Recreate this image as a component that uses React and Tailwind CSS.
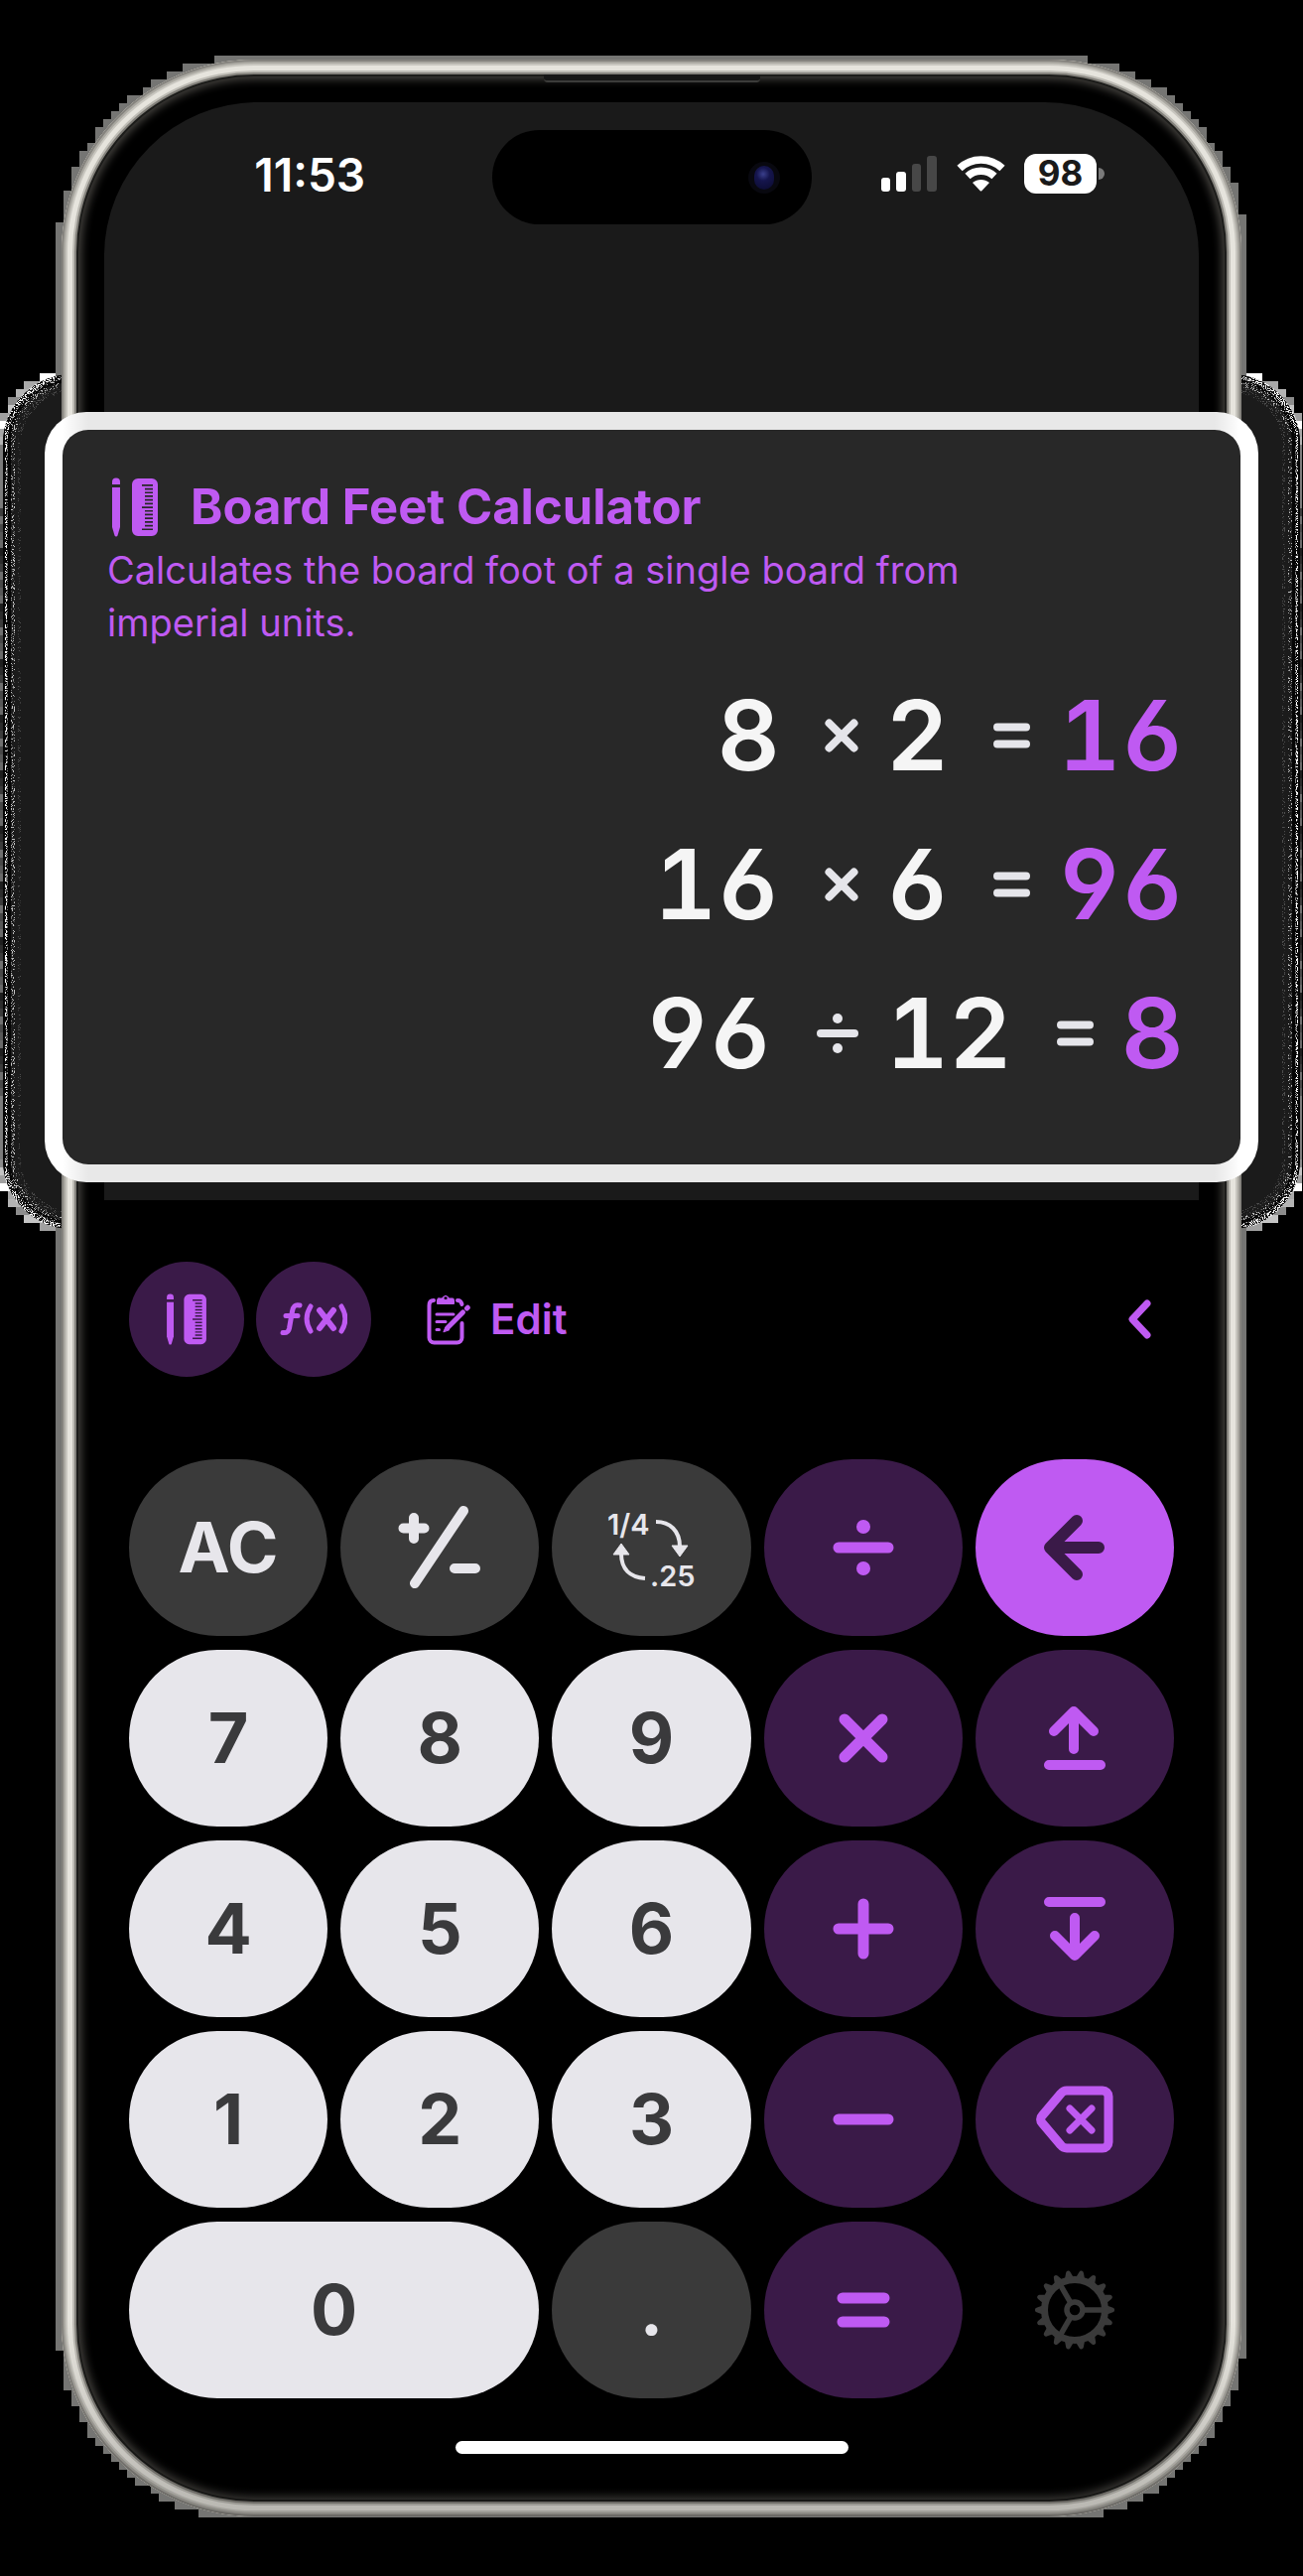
import React from "react";

const W = 1313;
const H = 2595;
const CELL = 8;

/* rows of 8px cells that cover a rounded rectangle, snapped outward */
function steppedRows({ x0, y0, x1, y1, r }) {
  const rows = [];
  for (let y = Math.floor(y0 / CELL) * CELL; y < y1; y += CELL) {
    const mid = y < (y0 + y1) / 2 ? y + CELL : y;
    let dy = 0;
    if (mid < y0 + r) dy = y0 + r - mid;
    if (mid > y1 - r) dy = mid - (y1 - r);
    const inset = dy > 0 ? r - Math.sqrt(Math.max(0, r * r - dy * dy)) : 0;
    const left = Math.floor((x0 + inset) / CELL) * CELL;
    const right = Math.ceil((x1 - inset) / CELL) * CELL;
    rows.push({ x: left, y, w: right - left });
  }
  return rows;
}

const phoneRows = steppedRows({ x0: 62, y0: 60, x1: 1251, y1: 2535, r: 196 });
const haloRows = steppedRows({ x0: 3, y0: 377, x1: 1310, y1: 1238, r: 70 });

const cornerGreys = ["#ffffff", "#a8a8a8", "#b4b4b4", "#8c8c8c", "#c4c4c4", "#a0a0a0"];
const edgeGreys = ["#6a6a6a", "#3c3c3c", "#585858", "#2c2c2c", "#484848", "#1e1e1e", "#707070"];

function haloFill(y, i) {
  const fromEnd = Math.min(y - 376, 1232 - y);
  if (fromEnd < 72) return cornerGreys[i % 6];
  if (fromEnd < 130) return "#7c7c7c";
  return edgeGreys[(i * 5) % 7];
}

function Backdrop() {
  return (
    <svg
      className="absolute inset-0 h-full w-full"
      viewBox={`0 0 ${W} ${H}`}
      preserveAspectRatio="none"
      aria-hidden="true"
    >
      <defs>
        <filter id="speckDense" x="0" y="0" width="100%" height="100%">
          <feTurbulence type="fractalNoise" baseFrequency="0.9" numOctaves="2" seed="4" />
          <feColorMatrix values="0 0 0 0 1  0 0 0 0 1  0 0 0 0 1  14 0 0 0 -6.8" />
          <feComposite in2="SourceGraphic" operator="in" />
        </filter>
        <filter id="speckLight" x="0" y="0" width="100%" height="100%">
          <feTurbulence type="fractalNoise" baseFrequency="0.9" numOctaves="2" seed="9" />
          <feColorMatrix values="0 0 0 0 0.55  0 0 0 0 0.55  0 0 0 0 0.55  12 0 0 0 -6.8" />
          <feComposite in2="SourceGraphic" operator="in" />
        </filter>
      </defs>
      <g shapeRendering="crispEdges">
        {haloRows.map((c, i) => (
          <rect key={i} x={c.x} y={c.y} width={c.w} height={CELL} fill={haloFill(c.y, i)} />
        ))}
        {phoneRows.map((c, i) => (
          <rect key={i} x={c.x} y={c.y} width={c.w} height={CELL} fill="#757573" />
        ))}
      </g>
      <rect x="3" y="377" width="1307" height="861" rx="70" fill="#1b1b1b" />
      <rect x="7" y="381" width="1299" height="853" rx="66" fill="none" stroke="#050505" strokeWidth="8" />
      <rect x="5" y="379" width="1303" height="857" rx="68" fill="none" stroke="#fff" strokeWidth="5" filter="url(#speckDense)" />
      <rect x="11" y="385" width="1291" height="845" rx="62" fill="none" stroke="#fff" strokeWidth="8" filter="url(#speckLight)" />
      <rect x="18" y="392" width="1277" height="831" rx="56" fill="none" stroke="#fff" strokeWidth="6" strokeOpacity="0.3" filter="url(#speckLight)" />
    </svg>
  );
}

function PencilRuler({ className }) {
  const ticks = [0, 1, 2, 3, 4, 5, 6, 7, 8, 9, 10, 11, 12];
  return (
    <svg className={className} viewBox="0 0 48 60" fill="currentColor" aria-hidden="true">
      <path d="M1 7V4.500a4 4 0 0 1 8 0V7z" />
      <path d="M1 10h8v40L6.500 58.500a1.600 1.600 0 0 1-3 0L1 50z" />
      <path
        fillRule="evenodd"
        d={
          "M27 1h14a6 6 0 0 1 6 6v46a6 6 0 0 1-6 6H27a6 6 0 0 1-6-6V7a6 6 0 0 1 6-6z" +
          ticks.map((t) => `M${t % 6 === 0 ? 31 : 34} ${7 + t * 3.7}H42v1.700H${t % 6 === 0 ? 31 : 34}z`).join("")
        }
      />
    </svg>
  );
}

function Stroke({ className, box = "0 0 80 80", width = 11, children }) {
  return (
    <svg
      className={className}
      viewBox={box}
      fill="none"
      stroke="currentColor"
      strokeWidth={width}
      strokeLinecap="round"
      strokeLinejoin="round"
      aria-hidden="true"
    >
      {children}
    </svg>
  );
}

const keyIcon = "h-20 w-20";

const icons = {
  plusMinus: (
    <Stroke className="h-[90px] w-[90px]" box="0 0 90 90" width={10}>
      <path d="M20 81L69 8M19 15v21M8.500 25.500h21M60 66h21" />
    </Stroke>
  ),
  fraction: (
    <svg className="h-[90px] w-[100px]" viewBox="0 0 100 90" fill="none" aria-hidden="true">
      <text x="6" y="32" fill="currentColor" className="font-['Inter',sans-serif] text-[29px] font-semibold">1/4</text>
      <text x="49" y="84" fill="currentColor" className="font-['Inter',sans-serif] text-[29px] font-semibold">.25</text>
      <path d="M55 19c14 0 24 9 24 25M44 76c-15-1-24-9-24-25" stroke="currentColor" strokeWidth="4" />
      <path d="M71 43h16l-8 11zM12 52h16l-8-11z" fill="currentColor" stroke="currentColor" strokeLinejoin="round" />
    </svg>
  ),
  divide: (
    <Stroke className={keyIcon}>
      <path d="M15 40h50" />
      <circle cx="40" cy="19" r="7" fill="currentColor" stroke="none" />
      <circle cx="40" cy="61" r="7" fill="currentColor" stroke="none" />
    </Stroke>
  ),
  back: (
    <Stroke className={keyIcon} width={12}>
      <path d="M64 40H15M42 13L15 40l27 27" />
    </Stroke>
  ),
  times: (
    <Stroke className={keyIcon}>
      <path d="M21 21l38 38M59 21L21 59" />
    </Stroke>
  ),
  up: (
    <Stroke className={keyIcon} width={10}>
      <path d="M39 14v37M19 33l20-20 20 20M14 67h52" />
    </Stroke>
  ),
  plus: (
    <Stroke className={keyIcon}>
      <path d="M15 40h50M40 15v50" />
    </Stroke>
  ),
  down: (
    <Stroke className={keyIcon} width={10}>
      <path d="M40 29v38M20 47l20 20 20-20M14 13h52" />
    </Stroke>
  ),
  minus: (
    <Stroke className={keyIcon}>
      <path d="M15 40h50" />
    </Stroke>
  ),
  backspace: (
    <Stroke className={keyIcon} width={9}>
      <path d="M32 11H68a6 6 0 0 1 6 6V63a6 6 0 0 1-6 6H32a8 8 0 0 1-6-3L7 43.500a5 5 0 0 1 0-7L26 14a8 8 0 0 1 6-3z" />
      <path d="M35 29l22 22M57 29L35 51" strokeWidth="7" />
    </Stroke>
  ),
  equals: (
    <Stroke className={keyIcon}>
      <path d="M19 28h42M19 52h42" />
    </Stroke>
  ),
};

function Gear() {
  const teeth = Array.from({ length: 18 }, (_, i) => i * 20);
  return (
    <svg className="h-[84px] w-[84px]" viewBox="-42 -42 84 84" fill="none" stroke="currentColor" aria-hidden="true">
      {teeth.map((a) => (
        <path key={a} d="M31 -5L38.500 -2.200a2.300 2.300 0 0 1 0 4.400L31 5z" fill="currentColor" stroke="none" transform={`rotate(${a})`} />
      ))}
      <circle r="30.500" strokeWidth="7" />
      <circle r="8" strokeWidth="5.500" />
      {[0, 120, 240].map((a) => (
        <path key={a} d="M9 0H29" strokeWidth="5.500" transform={`rotate(${a})`} />
      ))}
    </svg>
  );
}

const tones = {
  dark: "bg-[#3a3a3a] text-[#e7e6eb]",
  light: "bg-[#e7e6eb] text-[#3a3a3c]",
  violet: "bg-[#3a1a48] text-[#bf5af2]",
  accent: "bg-[#bf5af2] text-[#3a1a48]",
  bare: "bg-transparent text-[#3a3a3a]",
};

const keys = [
  { label: "AC", tone: "dark" },
  { icon: icons.plusMinus, name: "Plus or minus", tone: "dark" },
  { icon: icons.fraction, name: "Fraction to decimal", tone: "dark" },
  { icon: icons.divide, name: "Divide", tone: "violet" },
  { icon: icons.back, name: "Back", tone: "accent" },
  { label: "7", tone: "light" },
  { label: "8", tone: "light" },
  { label: "9", tone: "light" },
  { icon: icons.times, name: "Multiply", tone: "violet" },
  { icon: icons.up, name: "Store", tone: "violet" },
  { label: "4", tone: "light" },
  { label: "5", tone: "light" },
  { label: "6", tone: "light" },
  { icon: icons.plus, name: "Add", tone: "violet" },
  { icon: icons.down, name: "Recall", tone: "violet" },
  { label: "1", tone: "light" },
  { label: "2", tone: "light" },
  { label: "3", tone: "light" },
  { icon: icons.minus, name: "Subtract", tone: "violet" },
  { icon: icons.backspace, name: "Delete", tone: "violet" },
  { label: "0", tone: "light", wide: true },
  { label: ".", tone: "dark" },
  { icon: icons.equals, name: "Equals", tone: "violet" },
  { icon: <Gear />, name: "Settings", tone: "bare" },
];

function Key({ label, icon, name, tone, wide }) {
  return (
    <button
      type="button"
      aria-label={name}
      className={`flex h-[178px] items-center justify-center rounded-full text-[70px] leading-none font-bold ${tones[tone]} ${wide ? "col-span-2" : ""}`}
    >
      {icon || label}
    </button>
  );
}

function StatusBar() {
  return (
    <header className="grid grid-cols-[1fr_322px_1fr] pt-7 text-white">
      <div className="flex items-center justify-center pb-1.5 pl-6">
        <time className="text-[46px] leading-none font-semibold">11:53</time>
      </div>
      <div className="flex h-[95px] items-center justify-end rounded-full bg-black pr-8">
        <span className="flex h-8 w-8 items-center justify-center rounded-full bg-[#08080f]">
          <span className="h-6 w-5 rounded-full bg-[radial-gradient(circle_at_45%_35%,#3a3f8c_0,#15154d_35%,#0a0a2c_100%)]" />
        </span>
      </div>
      <div className="flex items-center justify-end pr-[95px] pb-2">
        <svg className="h-9 w-14" viewBox="0 0 56 36" fill="currentColor" aria-label="Signal">
          <rect x="0" y="22" width="9" height="14" rx="3" />
          <rect x="15" y="16" width="10" height="20" rx="3" />
          <rect x="31" y="8" width="9" height="28" rx="3" fill="#474747" />
          <rect x="46" y="0" width="10" height="36" rx="3" fill="#474747" />
        </svg>
        <svg className="ml-5 h-[37px] w-[49px]" viewBox="0 0 49 37" fill="none" aria-label="Wi-Fi">
          <path d="M3 13.500C15 2 34 2 46 13.500" stroke="currentColor" strokeWidth="7.500" />
          <path d="M11 21.500C18.500 14.500 30.500 14.500 38 21.500" stroke="currentColor" strokeWidth="7.500" />
          <path d="M16 28c5-4 12-4 17 0l-7.500 8a1.400 1.400 0 0 1-2 0z" fill="currentColor" />
        </svg>
        <span className="ml-[19px] flex h-10 w-[73px] items-center justify-center rounded-[12px] bg-white text-[35px] leading-none font-bold text-[#1a1a1a]">
          98
        </span>
        <span className="ml-0.5 h-3 w-1.5 rounded-r-full bg-[#7a7a7a]" />
      </div>
    </header>
  );
}

const opIcons = {
  "×": (
    <Stroke className="h-10 w-[34px]" box="0 0 34 40" width={8}>
      <path d="M4.500 7.500l25 25M29.500 7.500l-25 25" />
    </Stroke>
  ),
  "÷": (
    <Stroke className="h-10 w-[42px]" box="0 0 42 40" width={8}>
      <path d="M4 20h34" />
      <circle cx="21" cy="5" r="5" fill="currentColor" stroke="none" />
      <circle cx="21" cy="35" r="5" fill="currentColor" stroke="none" />
    </Stroke>
  ),
  "=": (
    <Stroke className="h-10 w-[37px]" box="0 0 37 40" width={8}>
      <path d="M4 11.500h29M4 28.500h29" />
    </Stroke>
  ),
};

function Equation({ a, op, b, result }) {
  return (
    <li className="flex h-[150px] items-center justify-end text-[98px] leading-none font-semibold text-[#f5f5f5] [font-feature-settings:'tnum','ss01']">
      <span>{a}</span>
      <span className="mr-7 ml-[45px] text-[#e5e5ea]">{opIcons[op]}</span>
      <span>{b}</span>
      <span className="mr-7 ml-[45px] text-[#e5e5ea]">{opIcons["="]}</span>
      <span className="text-[#bf5af2]">{result}</span>
    </li>
  );
}

function ResultCard() {
  return (
    <section className="relative mt-[189px] -mx-[60px] rounded-[42px] bg-[linear-gradient(90deg,#fff_0,#fff_18px,#f4f4f4_30px,#e8e8e8_44px,#e8e8e8_calc(100%-44px),#f4f4f4_calc(100%-30px),#fff_calc(100%-18px))] p-[18px]">
      <div className="rounded-[26px] bg-[#282828] pt-10 pr-[57px] pb-[57px] pl-[45px] text-[#bf5af2]">
        <div className="flex h-[75px] items-center">
          <PencilRuler className="ml-1 h-[60px] w-12" />
          <h1 className="ml-8 text-[49px] leading-none font-bold">Board Feet Calculator</h1>
        </div>
        <p className="max-w-[900px] text-[38px] leading-[53px]">
          Calculates the board foot of a single board from imperial units.
        </p>
        <ul className="mt-3">
          <Equation a="8" op="×" b="2" result="16" />
          <Equation a="16" op="×" b="6" result="96" />
          <Equation a="96" op="÷" b="12" result="8" />
        </ul>
      </div>
    </section>
  );
}

function Toolbar() {
  const round = "flex h-[116px] w-[116px] items-center justify-center rounded-full bg-[#3a1a48]";
  return (
    <nav className="flex items-center text-[#bf5af2]">
      <button type="button" aria-label="Tools" className={round}>
        <PencilRuler className="h-[52px] w-[42px]" />
      </button>
      <button type="button" aria-label="Functions" className={`${round} ml-3`}>
        <Stroke className="h-9 w-[68px]" box="0 0 68 36" width={6}>
          <path d="M20 4c-5-1-6.500 1-7.500 6l-3 17c-.8 4-2.500 5-6.500 4.500M6 14.500h12" strokeWidth="5" />
          <path d="M31 5c-5 8-5 17 0 25M62 5c5 8 5 17 0 25" strokeWidth="5" />
          <path d="M40 9l14 18M54 9L40 27" />
        </Stroke>
      </button>
      <button type="button" className="ml-14 flex items-center gap-5 text-[42px] leading-none font-semibold">
        <svg className="h-[54px] w-11" viewBox="0 0 44 54" fill="none" stroke="currentColor" strokeLinecap="round" strokeLinejoin="round" aria-hidden="true">
          <path d="M7 8C4 8 2.500 10 2.500 13v32.500a5 5 0 0 0 5 5h23a5 5 0 0 0 5-5V31M31 8c2.500 0 4 1.500 4.500 4" strokeWidth="4" />
          <path d="M12 6h3.500a3.800 3.800 0 0 1 7 0H26a1.500 1.500 0 0 1 1.500 1.500v4H10.500v-4A1.500 1.500 0 0 1 12 6zM19 3.500a2 2 0 1 0 .1 0z" fill="currentColor" fillRule="evenodd" strokeWidth="1" />
          <path d="M10 22h17M10 29.500h9M10 37.500h2.500" strokeWidth="3" />
          <path d="M21 35.500L36.500 20" strokeWidth="5" />
          <path d="M17 39.500l2-5 3.500 3z" fill="currentColor" strokeWidth="1" />
          <path d="M40.500 16l.8-.8" strokeWidth="5" />
        </svg>
        Edit
      </button>
      <button type="button" aria-label="Collapse" className="mr-4 ml-auto p-1">
        <Stroke className="h-[42px] w-7" box="0 0 28 42" width={7}>
          <path d="M21 5L6 21l15 16" />
        </Stroke>
      </button>
    </nav>
  );
}

export default function App() {
  return (
    <main className="relative min-h-screen bg-black px-[62px] pt-[60px] pb-[60px] font-['Inter',sans-serif]">
      <Backdrop />
      <div className="relative rounded-[194px] bg-black p-[43px] shadow-[inset_0_0_0_2px_#85837e,inset_0_0_0_4px_#aaa8a1,inset_0_0_0_6px_#c8c6bf,inset_0_0_0_11px_#e6e4dd,inset_0_0_0_13px_#bfbdb6,inset_0_0_0_15px_#84827c,inset_0_0_0_17px_#1c1c1a,inset_0_0_8px_20px_#45433f]">
        <div className="absolute inset-0 rounded-[194px] bg-[linear-gradient(180deg,transparent_0,transparent_92%,rgba(0,0,0,0.2)_100%)]" />
        <span className="absolute top-[15px] left-1/2 h-2 w-[218px] -translate-x-1/2 rounded-b border-b-2 border-[#3c3c3a] bg-[#161616]" />
        <div className="relative rounded-t-[155px] bg-[#1a1a1a] pb-[18px]">
          <StatusBar />
          <ResultCard />
        </div>
        <div className="relative px-[25px] pt-[62px] pb-5">
          <Toolbar />
          <div className="mt-[83px] grid grid-cols-5 gap-x-[13px] gap-y-3.5">
            {keys.map((k) => (
              <Key key={k.label || k.name} {...k} />
            ))}
          </div>
          <div className="mx-auto mt-[43px] h-[13px] w-[396px] rounded-full bg-white" />
        </div>
      </div>
    </main>
  );
}
